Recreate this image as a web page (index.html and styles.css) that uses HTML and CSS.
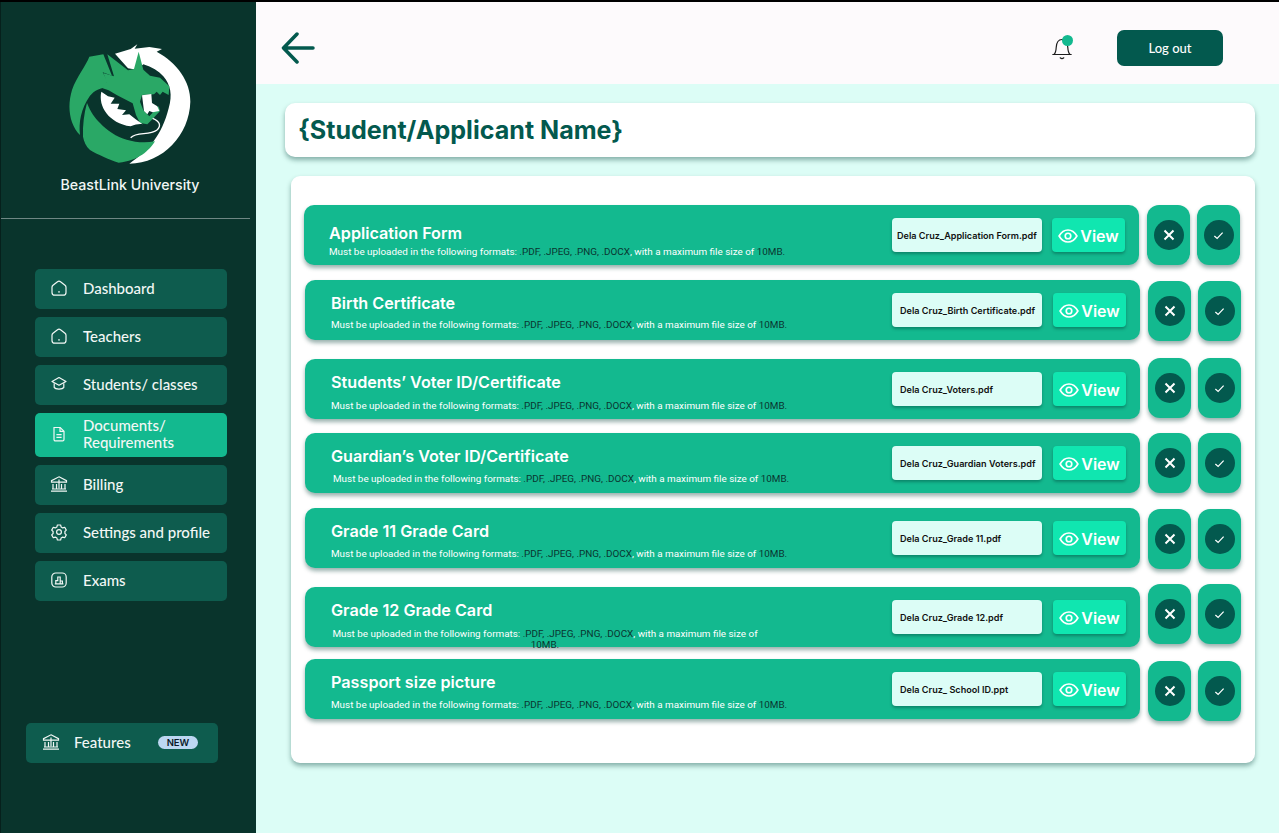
FILE: index.html
```html
<!DOCTYPE html>
<html lang="en">
<head>
    <meta charset="UTF-8">
    <title>BeastLink University - Documents</title>
    <link rel="stylesheet" href="styles.css">
</head>
<body>
    <svg class="icon-defs" width="0" height="0" aria-hidden="true">
        <defs>
            <symbol id="i-home" viewBox="0 0 18 18"><path d="M2 8.200C2 7.400 2.300 6.900 3 6.300L7.500 2.700C8.400 2 9.600 2 10.500 2.700L15 6.300C15.700 6.900 16 7.400 16 8.200V13.400A2.800 2.800 0 0 1 13.200 16.200H4.800A2.800 2.800 0 0 1 2 13.400z"/><path d="M9 12v1.800"/></symbol>
            <symbol id="i-cap" viewBox="0 0 18 18"><path d="M9 2.500 16 6.400 9 10.300 2 6.400z" stroke-linejoin="round"/><path d="M4.200 8.200v4.200c1.200 2.200 8.400 2.200 9.600 0V8.200"/></symbol>
            <symbol id="i-doc" viewBox="0 0 18 18"><path d="M4 2.500h6.200L14 6.300v8.200a1.400 1.400 0 0 1-1.400 1.400H5.400A1.400 1.400 0 0 1 4 14.500z"/><path d="M10 2.600v3.800h3.900M6.400 9.600h5.200M6.400 12.400h5.200"/></symbol>
            <symbol id="i-bank" viewBox="0 0 18 18"><path d="M9 1.800 16.500 5.600v1.500h-15V5.600zM3 9v4.600M6.500 9v4.600M11.500 9v4.600M15 9v4.600M2 14h14M1 16.200h16"/><path d="M9 4.500v9"/></symbol>
            <symbol id="i-gear" viewBox="0 0 18 18"><circle cx="9" cy="9" r="2.400"/><path d="M7.400 2h3.200l.5 1.900 1.700 1 1.900-.6 1.600 2.800-1.400 1.400v2l1.400 1.400-1.600 2.800-1.900-.6-1.700 1-.5 1.900H7.400l-.5-1.900-1.700-1-1.900.6-1.600-2.800 1.400-1.400v-2L1.700 7.100l1.600-2.800 1.900.6 1.700-1z" stroke-linejoin="round"/></symbol>
            <symbol id="i-chart" viewBox="0 0 18 18"><rect x="1.800" y="2" width="14.400" height="14" rx="4"/><path d="M5.800 12.800V9.600H7.800V6H10.200V12.800M10.200 10H12.400V12.800M4.800 12.800h8.600"/></symbol>
            <symbol id="i-eye" viewBox="0 0 18 18"><path d="M1 9c2-3.600 4.800-5.400 8-5.400S15 5.400 17 9c-2 3.600-4.800 5.400-8 5.400S3 12.600 1 9z"/><circle cx="9" cy="9" r="2.500"/></symbol>
            <symbol id="i-x" viewBox="0 0 12 12"><path d="M1.500 1.500l9 9M10.500 1.500l-9 9"/></symbol>
            <symbol id="i-check" viewBox="0 0 12 12"><path d="M1.500 6.500 4.500 9.300 10.500 2.800"/></symbol>
        </defs>
    </svg>

    <div class="app">
        <aside class="sidebar">
            <div class="brand">
                <svg class="logo" viewBox="0 0 420 420" aria-label="BeastLink University logo">
                    <path fill="#ffffff" d="M165 56 212 42 232 28 224 41 268 36 306 42 290 50C352 84 392 140 391 200 388 300 310 384 208 386 266 346 306 300 326 220 338 180 332 150 310 124 296 108 276 96 250 88L230 104 204 100z"/>
                    <path fill="#2aa866" d="M88 65C78 92 50 124 36 165 26 198 26 232 36 262 42 278 50 292 60 300 56 262 62 222 90 182 104 166 118 160 135 158L142 138 128 112 156 122 130 58z"/>
                    <path fill="#2aa866" d="M81 204C92 232 104 248 120 264 140 286 170 306 200 314 226 322 256 324 285 319 268 346 236 378 176 383 146 374 112 358 90 345 78 334 72 320 69 305 68 270 72 236 81 204z"/>
                    <path fill="#2aa866" d="M142 58 204 106 222 102 236 50 250 104 270 122 300 128 328 154 326 180 308 170 300 180 290 170 282 178 246 180 240 200 250 226 268 244 296 214 300 228 274 256 262 268 240 264 228 240 218 205 170 180 146 166 128 160 140 140 130 114 162 124z"/>
                    <path fill="#ffffff" d="M124 170C114 214 146 264 212 274 228 268 238 266 248 268L226 252 208 238 186 240 198 226 172 222 178 206 152 206 164 188 144 184z"/>
                    <path fill="#ffffff" d="M246 181 274 177 276 204 292 214 298 228 278 232 268 228 262 238 252 228z"/>
                    <path fill="none" stroke="#ffffff" stroke-width="4" d="M212 308C230 290 268 302 290 286 306 272 298 258 278 250"/>
                </svg>
                <p class="brand-name">BeastLink University</p>
            </div>
            <hr class="side-rule">

            <nav class="nav">
                <a class="nav-item"><svg class="nav-icon"><use href="#i-home"/></svg><span>Dashboard</span></a>
                <a class="nav-item"><svg class="nav-icon"><use href="#i-home"/></svg><span>Teachers</span></a>
                <a class="nav-item"><svg class="nav-icon"><use href="#i-cap"/></svg><span>Students/ classes</span></a>
                <a class="nav-item active"><svg class="nav-icon"><use href="#i-doc"/></svg><span>Documents/<br>Requirements</span></a>
                <a class="nav-item"><svg class="nav-icon"><use href="#i-bank"/></svg><span>Billing</span></a>
                <a class="nav-item"><svg class="nav-icon"><use href="#i-gear"/></svg><span>Settings and profile</span></a>
                <a class="nav-item"><svg class="nav-icon"><use href="#i-chart"/></svg><span>Exams</span></a>
            </nav>

            <a class="nav-item features"><svg class="nav-icon"><use href="#i-bank"/></svg><span>Features</span><b class="badge">NEW</b></a>
        </aside>

        <div class="main">
            <header class="topbar">
                <svg class="back" viewBox="0 0 34 32"><path d="M32 16H3M16 2 2.500 16 16 30"/></svg>
                <div class="top-right">
                    <div class="bell">
                        <svg viewBox="0 0 22 24"><path d="M3 18.500c1.800-1.800 2-3.600 2.200-7C5.500 6.500 7.600 3.500 11 3.500s5.500 3 5.800 8c.2 3.400.4 5.200 2.200 7zM1.800 18.500h18.400M9.200 21.800c1 .8 2.600.8 3.600 0"/></svg>
                        <span class="bell-dot"></span>
                    </div>
                    <button class="logout">Log out</button>
                </div>
            </header>

            <section class="content">
                <div class="name-card"><h1>{Student/Applicant Name}</h1></div>

                <div class="list-card">
                    <div class="row r1">
                        <div class="bar">
                            <div class="bar-text">
                                <h2>Application Form</h2>
                                <p>Must be uploaded in the following formats: <span>.PDF, .JPEG, .PNG, .DOCX</span>, with a maximum file size of <span>10MB.</span></p>
                            </div>
                            <div class="file">Dela Cruz_Application Form.pdf</div>
                            <button class="view"><svg><use href="#i-eye"/></svg>View</button>
                        </div>
                        <div class="actions">
                            <div class="act"><i class="act-dot"><svg class="ico-x"><use href="#i-x"/></svg></i></div>
                            <div class="act"><i class="act-dot"><svg class="ico-c"><use href="#i-check"/></svg></i></div>
                        </div>
                    </div>
                    <div class="row r2">
                        <div class="bar">
                            <div class="bar-text">
                                <h2>Birth Certificate</h2>
                                <p>Must be uploaded in the following formats: <span>.PDF, .JPEG, .PNG, .DOCX</span>, with a maximum file size of <span>10MB.</span></p>
                            </div>
                            <div class="file">Dela Cruz_Birth Certificate.pdf</div>
                            <button class="view"><svg><use href="#i-eye"/></svg>View</button>
                        </div>
                        <div class="actions">
                            <div class="act"><i class="act-dot"><svg class="ico-x"><use href="#i-x"/></svg></i></div>
                            <div class="act"><i class="act-dot"><svg class="ico-c"><use href="#i-check"/></svg></i></div>
                        </div>
                    </div>
                    <div class="row r3">
                        <div class="bar">
                            <div class="bar-text">
                                <h2>Students’ Voter ID/Certificate</h2>
                                <p>Must be uploaded in the following formats: <span>.PDF, .JPEG, .PNG, .DOCX</span>, with a maximum file size of <span>10MB.</span></p>
                            </div>
                            <div class="file">Dela Cruz_Voters.pdf</div>
                            <button class="view"><svg><use href="#i-eye"/></svg>View</button>
                        </div>
                        <div class="actions">
                            <div class="act"><i class="act-dot"><svg class="ico-x"><use href="#i-x"/></svg></i></div>
                            <div class="act"><i class="act-dot"><svg class="ico-c"><use href="#i-check"/></svg></i></div>
                        </div>
                    </div>
                    <div class="row r4">
                        <div class="bar">
                            <div class="bar-text">
                                <h2>Guardian’s Voter ID/Certificate</h2>
                                <p>Must be uploaded in the following formats: <span>.PDF, .JPEG, .PNG, .DOCX</span>, with a maximum file size of <span>10MB.</span></p>
                            </div>
                            <div class="file">Dela Cruz_Guardian Voters.pdf</div>
                            <button class="view"><svg><use href="#i-eye"/></svg>View</button>
                        </div>
                        <div class="actions">
                            <div class="act"><i class="act-dot"><svg class="ico-x"><use href="#i-x"/></svg></i></div>
                            <div class="act"><i class="act-dot"><svg class="ico-c"><use href="#i-check"/></svg></i></div>
                        </div>
                    </div>
                    <div class="row r5">
                        <div class="bar">
                            <div class="bar-text">
                                <h2>Grade 11 Grade Card</h2>
                                <p>Must be uploaded in the following formats: <span>.PDF, .JPEG, .PNG, .DOCX</span>, with a maximum file size of <span>10MB.</span></p>
                            </div>
                            <div class="file">Dela Cruz_Grade 11.pdf</div>
                            <button class="view"><svg><use href="#i-eye"/></svg>View</button>
                        </div>
                        <div class="actions">
                            <div class="act"><i class="act-dot"><svg class="ico-x"><use href="#i-x"/></svg></i></div>
                            <div class="act"><i class="act-dot"><svg class="ico-c"><use href="#i-check"/></svg></i></div>
                        </div>
                    </div>
                    <div class="row r6">
                        <div class="bar">
                            <div class="bar-text">
                                <h2>Grade 12 Grade Card</h2>
                                <p>Must be uploaded in the following formats: <span>.PDF, .JPEG, .PNG, .DOCX</span>, with a maximum file size of <span>10MB.</span></p>
                            </div>
                            <div class="file">Dela Cruz_Grade 12.pdf</div>
                            <button class="view"><svg><use href="#i-eye"/></svg>View</button>
                        </div>
                        <div class="actions">
                            <div class="act"><i class="act-dot"><svg class="ico-x"><use href="#i-x"/></svg></i></div>
                            <div class="act"><i class="act-dot"><svg class="ico-c"><use href="#i-check"/></svg></i></div>
                        </div>
                    </div>
                    <div class="row r7">
                        <div class="bar">
                            <div class="bar-text">
                                <h2>Passport size picture</h2>
                                <p>Must be uploaded in the following formats: <span>.PDF, .JPEG, .PNG, .DOCX</span>, with a maximum file size of <span>10MB.</span></p>
                            </div>
                            <div class="file">Dela Cruz_ School ID.ppt</div>
                            <button class="view"><svg><use href="#i-eye"/></svg>View</button>
                        </div>
                        <div class="actions">
                            <div class="act"><i class="act-dot"><svg class="ico-x"><use href="#i-x"/></svg></i></div>
                            <div class="act"><i class="act-dot"><svg class="ico-c"><use href="#i-check"/></svg></i></div>
                        </div>
                    </div>
                </div>
            </section>
        </div>
    </div>
</body>
</html>
```

FILE: styles.css
```css
* {
    box-sizing: border-box;
}
body {
    margin: 0;
    font-family: 'Inter', sans-serif;
    background-color: #dcfdf6;
    overflow: hidden;
}
.icon-defs {
    position: absolute;
}
.app {
    display: flex;
    height: 833px;
    border-top: 2px solid #000;
}
.sidebar {
    width: 256px;
    flex-shrink: 0;
    background-color: #09342c;
    border-left: 1px solid #06201c;
    display: flex;
    flex-direction: column;
}
.brand {
    padding-top: 33px;
    display: flex;
    flex-direction: column;
    align-items: center;
}
.logo {
    width: 140px;
    height: 140px;
    margin-left: 2px;
}
.brand-name {
    margin: 1px 0 0;
    color: #f2f7f5;
    font-size: 14.200px;
    font-weight: 500;
    line-height: 17px;
    padding-left: 3px;
}
.side-rule {
    width: 249px;
    margin: 25px 0 0;
    border: 0;
    border-top: 1px solid #6f8784;
}
.nav {
    display: flex;
    flex-direction: column;
    gap: 8px;
    margin: 50px 0 0 34px;
}
.nav-item {
    display: flex;
    align-items: center;
    width: 192px;
    min-height: 40px;
    padding: 0 0 2px 15px;
    background-color: #0e5c4e;
    border-radius: 5px;
    color: #f2f7f5;
    font-family: 'Lato', sans-serif;
    font-size: 15px;
    font-weight: 500;
    line-height: 17px;
}
.nav-item.active {
    min-height: 44px;
    background-color: #13b98f;
}
.nav-icon {
    width: 18px;
    height: 18px;
    margin-right: 15px;
    fill: none;
    stroke: #f2f7f5;
    stroke-width: 1.200;
}
.features {
    margin: 122px 0 0 25px;
}
.features .nav-icon {
    margin-left: 1px;
    margin-right: 14px;
}
.badge {
    margin-left: 27px;
    padding: 0 9px;
    background-color: #bcd7f2;
    border-radius: 7px;
    color: #0a1a2a;
    font-family: 'Inter', sans-serif;
    font-size: 9.500px;
    font-weight: 600;
    line-height: 13px;
}
.main {
    flex: 1;
    display: flex;
    flex-direction: column;
    min-width: 0;
}
.topbar {
    height: 82px;
    background-color: #fdfafc;
    display: flex;
    align-items: center;
    justify-content: space-between;
    padding: 10px 56px 0 25px;
}
.back {
    width: 34px;
    height: 32px;
    fill: none;
    stroke: #03594e;
    stroke-width: 3.500;
    stroke-linecap: round;
    stroke-linejoin: round;
}
.top-right {
    display: flex;
    align-items: center;
    gap: 44px;
}
.bell {
    position: relative;
    width: 22px;
    height: 24px;
    margin-left: -1px;
}
.bell svg {
    width: 22px;
    height: 24px;
    fill: none;
    stroke: #1c1c1c;
    stroke-width: 1.200;
    stroke-linecap: round;
}
.bell-dot {
    position: absolute;
    top: -1px;
    right: 0;
    width: 11px;
    height: 11px;
    border-radius: 50%;
    background-color: #13b98f;
}
.logout {
    width: 106px;
    height: 36px;
    background-color: #03594e;
    color: #fff;
    border: none;
    border-radius: 7px;
    font-family: 'Lato', sans-serif;
    font-size: 13px;
    font-weight: 500;
}
.content {
    flex: 1;
    padding: 19px 24px 0 29px;
}
.name-card {
    height: 54px;
    padding-left: 13px;
    display: flex;
    align-items: center;
    background-color: #fff;
    border-radius: 10px;
    box-shadow: 0 3px 5px rgba(3,60,52,0.4);
}
.name-card h1 {
    margin: 0;
    color: #03594e;
    font-size: 25.100px;
    font-weight: 700;
}
.list-card {
    height: 587px;
    margin: 19px 0 0 6px;
    padding-top: 29px;
    background-color: #fff;
    border-radius: 9px;
    box-shadow: 0 3px 5px rgba(3,60,52,0.4);
}
.row {
    display: flex;
    align-items: flex-start;
    height: 60px;
    margin-left: 14px;
}
.r1 {
    margin-left: 13px;
}
.r2 {
    margin-top: 15px;
}
.r3 {
    margin-top: 19px;
}
.r4 {
    margin-top: 14px;
}
.r5 {
    margin-top: 15px;
}
.r6 {
    margin-top: 19px;
}
.r7 {
    margin-top: 12px;
}
.bar {
    display: flex;
    align-items: center;
    width: 835px;
    height: 60px;
    padding: 0 14px 0 26px;
    background-color: #13b98f;
    border-radius: 10px;
    box-shadow: 0 3px 4px rgba(3,60,52,0.4);
}
.r1 .bar {
    padding-left: 25px;
}
.bar-text {
    flex: 1;
    height: 60px;
    padding-top: 13px;
}
.r1 .bar-text {
    padding-top: 18px;
}
.bar-text h2 {
    margin: 0;
    color: #fff;
    font-size: 16.200px;
    font-weight: 600;
    line-height: 20px;
}
.bar-text p {
    margin: 8px 0 0;
    color: #fff;
    font-family: 'Roboto', sans-serif;
    font-size: 9.900px;
    font-weight: 400;
    line-height: 10px;
    white-space: nowrap;
}
.r1 .bar-text p {
    margin-top: 4px;
}
.r2 .bar-text p {
    margin-top: 7px;
}
.r3 .bar-text p {
    margin-top: 9px;
}
.r4 .bar-text p {
    margin-left: 2px;
}
.r6 .bar-text p {
    width: 432px;
    margin-left: -2px;
    line-height: 11px;
    white-space: normal;
    text-align: center;
}
.bar-text p span {
    color: #0a3530;
}
.file {
    width: 150px;
    height: 34px;
    padding: 1px 0 0 8px;
    display: flex;
    align-items: center;
    background-color: #dcfdf6;
    border-radius: 4px;
    box-shadow: 0 2px 3px rgba(3,60,52,0.4);
    color: #111;
    font-size: 9.100px;
    font-weight: 600;
    white-space: nowrap;
}
.r1 .file {
    padding-left: 5px;
}
.view {
    display: flex;
    align-items: center;
    justify-content: center;
    gap: 2px;
    width: 73px;
    height: 34px;
    margin-left: 11px;
    padding: 1px 0 0;
    background-color: #10e6b0;
    border: none;
    border-radius: 4px;
    box-shadow: 0 2px 3px rgba(3,60,52,0.4);
    color: #fff;
    font-family: 'Inter', sans-serif;
    font-size: 16px;
    font-weight: 600;
}
.r1 .view {
    margin-left: 10px;
}
.view svg {
    width: 20px;
    height: 20px;
    fill: none;
    stroke: #fff;
    stroke-width: 1.500;
}
.actions {
    display: flex;
    gap: 7px;
    margin-left: 8px;
}
.r2 .actions,
.r5 .actions {
    margin-top: 1px;
}
.r3 .actions {
    margin-top: -1px;
}
.r6 .actions {
    margin-top: -3px;
}
.r7 .actions {
    margin-top: 2px;
}
.act {
    width: 43px;
    height: 60px;
    display: flex;
    align-items: center;
    justify-content: center;
    background-color: #13b98f;
    border-radius: 12px;
    box-shadow: 0 3px 4px rgba(3,60,52,0.4);
}
.act-dot {
    width: 30px;
    height: 30px;
    display: flex;
    align-items: center;
    justify-content: center;
    border-radius: 50%;
    background-color: #03594e;
}
.ico-x,
.ico-c {
    fill: none;
    stroke: #fff;
}
.ico-x {
    width: 12px;
    height: 12px;
    stroke-width: 2;
}
.ico-c {
    width: 11px;
    height: 11px;
    stroke-width: 1.300;
}
```
